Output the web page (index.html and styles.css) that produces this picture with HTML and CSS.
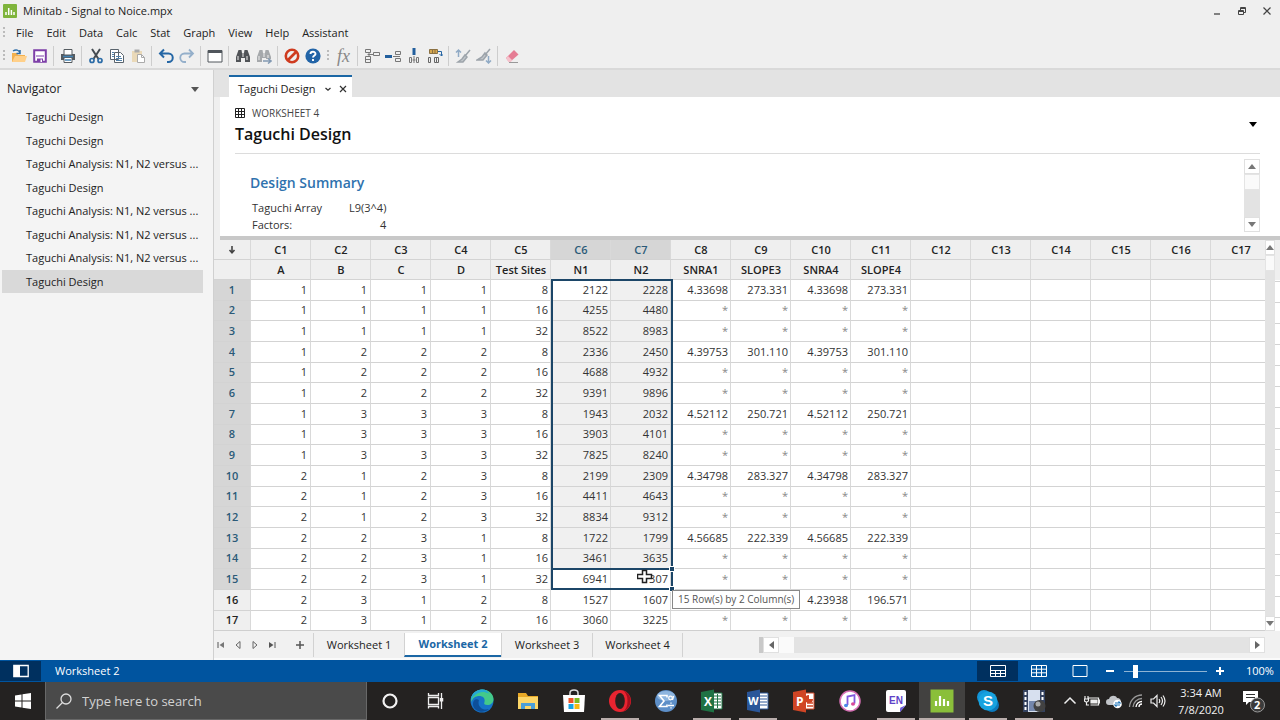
FILE: index.html
```html
<!DOCTYPE html>
<html lang="en">
<head>
<meta charset="utf-8">
<title>Minitab - Signal to Noice.mpx</title>
<link rel="stylesheet" href="styles.css">
</head>
<body>
<header class="app-head">
  <div class="titlebar">
    <svg class="logo" viewBox="0 0 14 14"><rect width="14" height="14" rx="1" fill="#7fb43c"/><path d="M3 11V8M5.7 11V4M8.4 11V6M11 11V8" stroke="#fff" stroke-width="1.5"/></svg>
    <span class="app-title">Minitab - Signal to Noice.mpx</span>
    <div class="win-buttons">
      <button aria-label="Minimize"><svg viewBox="0 0 10 10"><path d="M2 8h6" stroke="#444" stroke-width="1.3"/></svg></button>
      <button aria-label="Restore"><svg viewBox="0 0 10 10" fill="none" stroke="#444"><path d="M1.500 4.500h5v4h-5zM3.500 4V1.500h5v5H7M1.500 5.500h5M3.500 2.500h5"/></svg></button>
      <button aria-label="Close"><svg viewBox="0 0 10 10" stroke="#444" stroke-width="1.200"><path d="M1.500 1.500l7 7M8.500 1.500l-7 7"/></svg></button>
    </div>
  </div>
  <nav class="menubar">
    <i class="grip"></i>
    <button>File</button><button>Edit</button><button>Data</button><button>Calc</button><button>Stat</button><button>Graph</button><button>View</button><button>Help</button><button>Assistant</button>
  </nav>
  <div class="toolbar">
    <i class="grip"></i>
    <button aria-label="Open"><svg viewBox="0 0 16 16"><path d="M1 14V5h5l1 2h7v7z" fill="#f3b04e"/><path d="M1 14l3-6h12l-2 6z" fill="#ffd08a"/><path d="M2 3c3-2 6-1 7 2M9 2v3.500H5.500" fill="none" stroke="#2d6da8" stroke-width="1.500"/></svg></button>
    <button aria-label="Save"><svg viewBox="0 0 16 16"><path d="M2.200 2.200h11.600v11.600H2.200z" fill="#fff" stroke="#7d3fa8" stroke-width="2"/><path d="M4 8h8" stroke="#7d3fa8"/><path d="M5 10.500h6V14H5z" fill="#7d3fa8"/><path d="M8.500 11.500h1.500V14H8.500z" fill="#fff"/></svg></button>
    <i class="sep"></i>
    <button aria-label="Print"><svg viewBox="0 0 16 16"><path d="M1 6h14v6H1z" fill="#555b60"/><path d="M4 1.500h8V7H4zM4 9.500h8v5H4z" fill="#fff" stroke="#555b60"/><path d="M3 8.500h10M5 12h6" stroke="#4384b5" stroke-width="1.500"/></svg></button>
    <i class="sep"></i>
    <button aria-label="Cut"><svg viewBox="0 0 16 16" fill="none"><path d="M4 1l6.500 10M12 1L5.500 11" stroke="#444b52" stroke-width="2"/><circle cx="4" cy="12.500" r="2" stroke="#2d6da8" stroke-width="1.700"/><circle cx="12" cy="12.500" r="2" stroke="#2d6da8" stroke-width="1.700"/></svg></button>
    <button aria-label="Copy"><svg viewBox="0 0 16 16" fill="#fff" stroke="#59636c"><path d="M1.500 1.500h8v10h-8zM5.500 4.500h6l3 3v7h-9z"/><path d="M7 8.500h5M7 10.500h6M7 12.500h6M3 4.500h2M3 6.500h2M3 8.500h2" stroke="#5382aa"/></svg></button>
    <button aria-label="Paste"><svg viewBox="0 0 16 16"><path d="M2 3h10v11H2z" fill="#ead9b8"/><path d="M4.500 1.500h5v3h-5z" fill="#aaa"/><path d="M7.500 6.500h4l3 3v5h-7z" fill="#fff" stroke="#aaa"/><path d="M11.500 6.500v3h3" fill="none" stroke="#aaa"/></svg></button>
    <i class="sep"></i>
    <button aria-label="Undo"><svg viewBox="0 0 16 16" fill="none" stroke="#2466a5" stroke-width="2"><path d="M6 1.500L2 5.500l4 4M2 5.500h8.500a4 4 0 010 8.500H9"/></svg></button>
    <button aria-label="Redo"><svg viewBox="0 0 16 16" fill="none" stroke="#94afca" stroke-width="1.800"><path d="M10 1.500l4 4-4 4M14 5.500H5.500a4 4 0 000 8.500H7"/></svg></button>
    <i class="sep"></i>
    <button aria-label="Window"><svg viewBox="0 0 16 16"><path d="M1 2.500h14v11.500H1z" fill="#fff" stroke="#50565c"/><path d="M1 2h14v3H1z" fill="#50565c"/></svg></button>
    <i class="sep"></i>
    <button aria-label="Find"><svg viewBox="0 0 16 16" fill="#505357"><path d="M3.500 2h3l.5 3h2l.5-3h3L15 9v5h-5v-4H6v4H1V9z"/><path d="M3 8v4M12 8v4M8 5v4" stroke="#eee"/></svg></button>
    <button aria-label="Find next"><svg viewBox="0 0 16 16" fill="#a5a8ab"><path d="M3.500 2h3l.5 3h2l.5-3h3L15 9v2h-5v-1H6v4H1V9z"/><path d="M3 8v4M12 7v3M8 5v4" stroke="#eee"/><path d="M7 13h7M12 10.500l3 2.500-3 2.500" stroke="#8299b2" fill="none" stroke-width="1.500"/></svg></button>
    <i class="sep"></i>
    <button aria-label="Cancel"><svg viewBox="0 0 16 16" fill="none" stroke="#cf3b1f" stroke-width="2.600"><circle cx="8" cy="8" r="6.200"/><path d="M4 12l8-8"/></svg></button>
    <button aria-label="Help"><svg viewBox="0 0 16 16"><circle cx="8" cy="8" r="7.600" fill="#2264a7"/><path d="M5.500 6a2.500 2.300 0 115 0c0 1.500-2.500 1.500-2.500 3.500M8 11v2" fill="none" stroke="#fff" stroke-width="1.900"/></svg></button>
    <i class="grip mid"></i>
    <button class="fx" aria-label="Formula">fx</button>
    <i class="sep"></i>
    <button aria-label="Insert cells"><svg viewBox="0 0 16 16" fill="none" stroke="#777"><path d="M1.500 1.500h5v3h-5zM1.500 8.500h5v6h-5zM1.500 11.500h5M9.500 4.500h6v3h-6zM4 6.500h5M6 4.500l-2 2 2 2"/></svg></button>
    <button aria-label="Insert row"><svg viewBox="0 0 16 16" fill="none" stroke="#777"><path d="M0 8.500h7" stroke="#225f9d" stroke-width="3"/><path d="M10.500 3.500h5v3h-5zM10.500 10.500h5v3h-5zM8 8.500h7"/></svg></button>
    <button aria-label="Insert column"><svg viewBox="0 0 16 16" fill="none" stroke="#777"><path d="M3.500 9.500h2v5h-2zM10.500 9.500h2v5h-2zM8 8v7M6.500 12h3"/><path d="M8 0v7" stroke="#225f9d" stroke-width="3"/></svg></button>
    <button aria-label="Move columns"><svg viewBox="0 0 16 16" fill="none" stroke="#666"><path d="M2.500 1.500h8v4h-8z" fill="#d6a74f" stroke="#8b7142"/><path d="M5.500 1v5M8 1v5" stroke="#8b7142"/><path d="M1.500 9.500h2v5h-2zM7.500 9.500h2v5h-2zM9.500 9.500h2v5h-2z"/><path d="M11 3.500h3.500V8M12.500 6l2 2 2-2" stroke="#2766a4"/></svg></button>
    <i class="sep"></i>
    <button aria-label="Brush up"><svg viewBox="0 0 16 16" fill="none" stroke="#9da4ab" stroke-width="1.500"><path d="M15 2l-5 6M10 7l2 2-4 5H3l4-3z" fill="#c3c8cc"/><path d="M3.500 9V2M1 4.500L3.500 2 6 4.500" stroke="#90aac5"/></svg></button>
    <button aria-label="Brush down"><svg viewBox="0 0 16 16" fill="none" stroke="#9da4ab" stroke-width="1.500"><path d="M14 1L9 7M9 5l2 2-4 5H1l5-3z" fill="#c3c8cc"/><path d="M12.500 8v7M10 12.500l2.500 2.500 2.500-2.500" stroke="#90aac5"/></svg></button>
    <i class="sep"></i>
    <button aria-label="Erase"><svg viewBox="0 0 16 16"><path d="M2 10l8-8 4.500 4.500-8 7H4.500z" fill="#e57d94"/><path d="M2 10l2-2 4.500 4.500-2 1.500h-2z" fill="#f5c2cc"/><path d="M5 14.500h9" stroke="#999"/></svg></button>
  </div>
</header>
<div class="workspace">
  <aside class="navigator">
    <div class="nav-head"><span>Navigator</span><button class="caret" aria-label="Navigator options"></button></div>
    <ul class="nav-list">
      <li>Taguchi Design</li><li>Taguchi Design</li><li>Taguchi Analysis: N1, N2 versus ...</li><li>Taguchi Design</li><li>Taguchi Analysis: N1, N2 versus ...</li><li>Taguchi Analysis: N1, N2 versus ...</li><li>Taguchi Analysis: N1, N2 versus ...</li><li class="current">Taguchi Design</li>
    </ul>
  </aside>
  <main class="main">
    <div class="doc-tabs">
      <div class="doc-tab"><span>Taguchi Design</span>
        <button aria-label="Tab options"><svg viewBox="0 0 8 8" fill="none" stroke="#333" stroke-width="1.300"><path d="M1.500 3L4 5.200 6.500 3"/></svg></button>
        <button aria-label="Close tab"><svg viewBox="0 0 8 8" stroke="#333" stroke-width="1.200"><path d="M1 1l6 6M7 1L1 7"/></svg></button>
      </div>
    </div>
    <section class="output">
      <div class="out-head">
        <div class="out-source"><svg viewBox="0 0 10 10" fill="none" stroke="#222"><path d="M.5.500h9v9h-9zM.5 3.500h9M.5 6.500h9M3.500.500v9M6.500.500v9"/></svg><span>WORKSHEET 4</span></div>
        <h1>Taguchi Design</h1>
        <button class="caret dark" aria-label="Output options"></button>
      </div>
      <div class="out-body">
        <div class="summary">
          <h2>Design Summary</h2>
          <table class="facts"><tbody><tr><th scope="row">Taguchi Array</th><td>L9(3^4)</td></tr><tr><th scope="row">Factors:</th><td>4</td></tr></tbody></table>
        </div>
        <div class="vscroll out-scroll"><button class="up" aria-label="Scroll up"></button><i class="thumb"></i><button class="down" aria-label="Scroll down"></button></div>
      </div>
    </section>
    <section class="sheet">
      <div class="grid-wrap">
        <table class="grid">
          <colgroup id="cols"><col class="col-num"></colgroup>
          <thead id="head"></thead>
          <tbody id="rows"></tbody>
        </table>
        <div class="selection"></div>
        <div class="active-row"></div>
        <div class="tip">15 Row(s) by 2 Column(s)</div>
        <svg class="cursor" viewBox="0 0 16 16"><path d="M5.500 1.500h4v4h5v4h-5v4h-4v-4h-5v-4h5z" fill="#fff" stroke="#222" stroke-width="1.500"/></svg>
      </div>
      <div class="vscroll sheet-scroll"><button class="up" aria-label="Scroll up"></button><i class="thumb"></i><button class="down" aria-label="Scroll down"></button></div>
      <div class="edge"></div>
    </section>
    <div class="sheet-bar">
      <div class="steps">
        <button aria-label="First"><svg viewBox="0 0 10 10"><path d="M2 2v6" stroke="#555"/><path d="M8 2v6L3.500 5z" fill="#777"/></svg></button>
        <button aria-label="Previous"><svg viewBox="0 0 10 10"><path d="M7 1.500v7L3 5z" fill="none" stroke="#666"/></svg></button>
        <button aria-label="Next"><svg viewBox="0 0 10 10"><path d="M3 1.500v7L7 5z" fill="none" stroke="#666"/></svg></button>
        <button aria-label="Last"><svg viewBox="0 0 10 10"><path d="M8 2v6" stroke="#555"/><path d="M2 2v6l4.500-3z" fill="#555"/></svg></button>
      </div>
      <button class="add" aria-label="Add worksheet"><svg viewBox="0 0 10 10"><path d="M5 1v8M1 5h8" stroke="#555" stroke-width="1.500"/></svg></button>
      <button class="ws">Worksheet 1</button><button class="ws on">Worksheet 2</button><button class="ws">Worksheet 3</button><button class="ws last">Worksheet 4</button>
      <div class="hscroll"><button class="left" aria-label="Scroll left"></button><i class="thumb"></i><button class="right" aria-label="Scroll right"></button></div>
    </div>
  </main>
</div>
<footer class="status">
  <button class="tile" aria-label="Toggle navigator"><svg viewBox="0 0 16 14"><path d="M.8 1.500h14.400v11H.8z" fill="none" stroke="#fff" stroke-width="1.300"/><path d="M1 1h6v12H1z" fill="#fff"/></svg></button>
  <span class="status-name">Worksheet 2</span>
  <div class="views">
    <button class="tile" aria-label="Split view"><svg viewBox="0 0 16 14" fill="none" stroke="#fff"><path d="M.5 1.500h15v11H.5zM1 6.500h14M1 9.500h14M5.500 7v5M10.500 7v5"/></svg></button>
    <button aria-label="Data view"><svg viewBox="0 0 16 14" fill="none" stroke="#fff"><path d="M.5 1.500h15v11H.5zM1 5.200h14M1 8.800h14M5.500 2v10M10.500 2v10"/></svg></button>
    <button aria-label="Output view"><svg viewBox="0 0 16 14" fill="none" stroke="#fff"><path d="M1 1.500h14v11H1z"/></svg></button>
  </div>
  <div class="zoom">
    <button aria-label="Zoom out"><svg viewBox="0 0 8 8"><path d="M0 4h8" stroke="#fff" stroke-width="2"/></svg></button>
    <input type="range" min="0" max="100" value="12" aria-label="Zoom level">
    <button aria-label="Zoom in"><svg viewBox="0 0 8 8"><path d="M0 4h8M4 0v8" stroke="#fff" stroke-width="2"/></svg></button>
    <span class="percent">100%</span>
  </div>
</footer>
<footer class="taskbar">
  <button class="start" aria-label="Start"><svg viewBox="0 0 16 16" fill="#fff"><path d="M0 2.500l6.500-1v6H0zM7.500 1.300L16 0v7.500H7.500zM0 8.500h6.500v6L0 13.500zM7.500 8.500H16V16l-8.500-1.300z"/></svg></button>
  <label class="search"><svg viewBox="0 0 16 16" fill="none" stroke="#ddd" stroke-width="1.300"><circle cx="10" cy="6" r="5"/><path d="M6.500 9.500L.5 15.500"/></svg><input type="text" placeholder="Type here to search" aria-label="Type here to search"></label>
  <div class="apps">
    <button aria-label="Cortana"><svg viewBox="0 0 24 24"><circle cx="12" cy="12" r="6.500" fill="none" stroke="#f2f2f2" stroke-width="2.200"/></svg></button>
    <button aria-label="Task view"><svg viewBox="0 0 24 24" fill="none" stroke="#eee" stroke-width="1.300"><path d="M4.500 8.500h10v7h-10zM4.500 4v2.500h10V4M4.500 19.500v-2h10v2M17.500 4v16"/><path d="M17.500 9v3.500" stroke-width="3.500"/></svg></button>
    <button aria-label="Edge"><svg viewBox="0 0 24 24"><circle cx="12" cy="12" r="11.500" fill="#1673c8"/><path d="M1 10C2 4 7 .5 12 .5c7 0 11.500 5 11.500 9.500 0 4-3 6-6 6-3 0-4-1-3-3 1-4-2-6-5-6-4 0-7 2-8 6z" fill="#43c98a"/><path d="M1 10C2 4 7 .5 12 .5c4 0 6 2 7 4-8-4-15 0-18 7z" fill="#24a8d6"/><path d="M9 11c-2 6 3 11 10 9-5 5-15 3-16-4-.5-5 3-7 6-5z" fill="#0d4f99"/></svg></button>
    <button aria-label="Files"><svg viewBox="0 0 24 24"><path d="M2 4h8l2 3h10v13H2z" fill="#e8a927"/><path d="M2 8h20v12H2z" fill="#fcd668"/><path d="M5 20v-6h14v6h-4v-3H9v3z" fill="#4b9fd8"/></svg></button>
    <button aria-label="Store"><svg viewBox="0 0 24 24"><path d="M8 6V4q0-3 4-3t4 3v2" fill="none" stroke="#ddd" stroke-width="1.500"/><path d="M1 6h22l-1 17H2z" fill="#fff"/><path d="M6.500 9h5v5h-5z" fill="#ee5329"/><path d="M12.500 9h5v5h-5z" fill="#7dba22"/><path d="M6.500 15h5v5h-5z" fill="#18a4e3"/><path d="M12.500 15h5v5h-5z" fill="#f8b912"/></svg></button>
    <button class="run" aria-label="Opera"><svg viewBox="0 0 24 24"><circle cx="12" cy="12" r="11" fill="#e92430"/><path d="M15 1.500a11 11 0 010 21c3-2 4.500-5.500 4.500-10.500S18 3.500 15 1.500z" fill="#a70e1d"/><ellipse cx="12" cy="12" rx="4.800" ry="8" fill="#28201f"/></svg></button>
    <button aria-label="Statistics"><svg viewBox="0 0 24 24"><circle cx="12" cy="12" r="11" fill="#5d8fc8"/><ellipse cx="12" cy="7" rx="9" ry="5" fill="#8db5df"/><path d="M13 8.500V6.500H5.500L10 12l-4.500 5.500H13v-2" fill="none" stroke="#fff" stroke-width="1.600"/><circle cx="16.500" cy="9" r="1.800" fill="none" stroke="#fff" stroke-width="1.200"/><path d="M19.500 7l-1 4M14 16.500h6M17 13.500v1.300M17 18.200v1.300" stroke="#fff" stroke-width="1.300"/></svg></button>
    <button class="run" aria-label="Excel"><svg viewBox="0 0 24 24"><path d="M12 4h10v16H12z" fill="#fff" stroke="#1f7244"/><path d="M14 7h7M14 10h7M14 13h7M14 16h7M17.500 5v14" stroke="#1f7244"/><path d="M1 3l13-2.500v23L1 21z" fill="#1f7244"/><text x="4" y="17" class="ic-app">X</text></svg></button>
    <button class="run" aria-label="Word"><svg viewBox="0 0 24 24"><path d="M12 4h10v16H12z" fill="#fff" stroke="#2a5699"/><path d="M14 7h7M14 10h7M14 13h7M14 16h7" stroke="#2a5699"/><path d="M1 3l13-2.500v23L1 21z" fill="#2a5699"/><text x="2" y="16" class="ic-word">W</text></svg></button>
    <button aria-label="PowerPoint"><svg viewBox="0 0 24 24"><path d="M12 4h10v16H12z" fill="#fff" stroke="#d04525"/><path d="M15 14h6M15 17h6" stroke="#d04525" stroke-width="1.500"/><path d="M17 6v4h4a4 4 0 11-4-4z" fill="#d04525"/><path d="M1 3l13-2.500v23L1 21z" fill="#d04525"/><text x="4" y="17" class="ic-app">P</text></svg></button>
    <button aria-label="Music"><svg viewBox="0 0 24 24"><circle cx="12" cy="12" r="10" fill="#fff" stroke="#d870b5" stroke-width="1.500"/><path d="M9.500 16V7.500l7-1.500v8.500" fill="none" stroke="#8158dc" stroke-width="1.800"/><ellipse cx="8" cy="16.500" rx="2" ry="1.800" fill="#4a8be8"/><ellipse cx="15" cy="15" rx="2" ry="1.800" fill="#d9489a"/></svg></button>
    <button class="run" aria-label="Language"><svg viewBox="0 0 24 24"><path d="M4 1h16q2 0 2 2v13l-6 7H4q-2 0-2-2V3q0-2 2-2z" fill="#fff"/><path d="M22 16l-6 7v-3q0-2 2-2z" fill="#6658d8"/><text x="5" y="15" class="ic-en">EN</text></svg></button>
    <button class="run active" aria-label="Minitab"><svg viewBox="0 0 24 24"><path d="M.5.500h23v23H.5z" fill="#8abf3a"/><path d="M6 17v-5M10 17V7M14 17v-7M18 17v-5" stroke="#fff" stroke-width="2.200"/></svg></button>
    <button class="run" aria-label="Skype"><svg viewBox="0 0 24 24"><circle cx="8" cy="8" r="7" fill="#1294d8"/><circle cx="16" cy="16" r="7" fill="#0b79bd"/><circle cx="12" cy="12" r="9.500" fill="#17a2df"/><text x="7" y="17" class="ic-s">S</text></svg></button>
    <button class="run" aria-label="Recorder"><svg viewBox="0 0 24 24"><path d="M1 1h22v22H1z" fill="#d7e0ef"/><path d="M1 1h5v22H1zM18 1h5v22h-5z" fill="#34425f"/><path d="M2.500 3h2v3h-2zM2.500 8h2v3h-2zM2.500 13h2v3h-2zM2.500 18h2v3h-2zM19.500 3h2v3h-2zM19.500 8h2v3h-2z" fill="#fff"/><path d="M7 12h10v10H7z" fill="#7487ac"/><circle cx="17.500" cy="17" r="6" fill="#424242"/><circle cx="16" cy="15" r="2.500" fill="#aaa"/></svg></button>
  </div>
  <div class="tray">
    <button aria-label="Hidden icons"><svg viewBox="0 0 16 16" fill="none" stroke="#eee" stroke-width="1.500"><path d="M2.500 10.500L8 5l5.500 5.500"/></svg></button>
    <button aria-label="Battery"><svg viewBox="0 0 16 16" fill="none" stroke="#eee" stroke-width="1.200"><path d="M4.500 5h10v7h-8M14.500 7h1v3h-1M1 3v3M4 3v3M.5 6h4v2l-1.500 1H2L.5 8zM2.500 9v3H5"/><path d="M7 7h6v3H7z" fill="#eee"/></svg></button>
    <button aria-label="Cloud"><svg viewBox="0 0 16 16"><path d="M3 12a3 3 0 010-6c1-4 7-4 8-1 3 0 4 2 4 4l-2 3z" fill="#c2c5c9"/><circle cx="11.500" cy="11" r="4.300" fill="#fff"/><path d="M9 10h5l-1.500-1.500M14 12H9l1.500 1.500" fill="none" stroke="#1671b8" stroke-width="1.200"/></svg></button>
    <button aria-label="Network"><svg viewBox="0 0 16 16" fill="none" stroke="#999" stroke-width="1.300"><path d="M1.500 14A12.500 12.500 0 0114 2M5 14a9 9 0 019-8.500"/><path d="M8 14a6 6 0 016-5.500M11 14a3 3 0 013-3" stroke="#fff"/></svg></button>
    <button aria-label="Volume"><svg viewBox="0 0 16 16" fill="none" stroke="#eee" stroke-width="1.200"><path d="M1 6h2.500L7 2.500v11L3.500 10H1zM9 6q1.500 2 0 4M11 4q3 4 0 8M13 2.500q4 5.500 0 11"/></svg></button>
    <div class="clock"><time>3:34 AM</time><time>7/8/2020</time></div>
    <button class="notes" aria-label="Notifications"><svg viewBox="0 0 26 26"><path d="M2 3h15v11h-9l-3 3v-3H2z" fill="#fff"/><path d="M5 6.500h9M5 9.500h9" stroke="#333"/><circle cx="16.500" cy="17" r="7" fill="#3b3b3b" stroke="#999"/><text x="13" y="21" class="ic-count">2</text></svg></button>
  </div>
</footer>
<script src="app.js"></script>
</body>
</html>
```
FILE: app.js
```js
const names = ["A", "B", "C", "D", "Test Sites", "N1", "N2", "SNRA1", "SLOPE3", "SNRA4", "SLOPE4"];
const factors = ["1 1 1 1", "1 2 2 2", "1 3 3 3", "2 1 2 3", "2 2 3 1", "2 3 1 2"];
const sites = [8, 16, 32];
const n1 = [2122, 4255, 8522, 2336, 4688, 9391, 1943, 3903, 7825, 2199, 4411, 8834, 1722, 3461, 6941, 1527, 3060];
const n2 = [2228, 4480, 8983, 2450, 4932, 9896, 2032, 4101, 8240, 2309, 4643, 9312, 1799, 3635, 7307, 1607, 3225];
const ratios = [["4.33698", "273.331"], ["4.39753", "301.110"], ["4.52112", "250.721"], ["4.34798", "283.327"], ["4.56685", "222.339"], ["4.23938", "196.571"]];
const COLS = 17;
const TIP_ROW = 15;

function cell(tag, text, cls) {
  const el = document.createElement(tag);
  el.textContent = text;
  if (cls) el.className = cls;
  return el;
}

const cols = document.getElementById("cols");
const ids = document.createElement("tr");
const titles = document.createElement("tr");
const corner = cell("th", "", "corner");
corner.innerHTML = '<svg viewBox="0 0 8 8"><path d="M4 0v6M1.500 4L4 6.700 6.500 4" fill="none" stroke="#444" stroke-width="1.600"/></svg>';
ids.append(corner);
titles.append(cell("th", ""));
for (let c = 1; c <= COLS; c++) {
  const col = document.createElement("col");
  if (c < COLS) col.className = "col-data";
  cols.append(col);
  ids.append(cell("th", "C" + c, c === 6 || c === 7 ? "picked" : ""));
  titles.append(cell("th", names[c - 1] || ""));
}
document.getElementById("head").append(ids, titles);

const body = document.getElementById("rows");
for (let r = 0; r < n1.length; r++) {
  const group = Math.floor(r / 3);
  const pair = r % 3 === 0 ? ratios[group] : ["*", "*"];
  // The size tip lies over the first two result cells of its row.
  const left = r === TIP_ROW ? ["", ""] : pair;
  const values = [...factors[group].split(" "), sites[r % 3], n1[r], n2[r], ...left, ...pair];
  const row = document.createElement("tr");
  row.append(cell("th", r + 1, r < 15 ? "picked" : ""));
  for (let c = 1; c <= COLS; c++) {
    const value = values[c - 1] ?? "";
    let cls = value === "*" ? "missing" : "";
    if ((c === 6 || c === 7) && r < 14 && !(c === 6 && r === 0)) cls = "in-range";
    row.append(cell("td", value, cls));
  }
  body.append(row);
}
```
FILE: styles.css
```css
* { box-sizing: border-box; }
body { margin: 0; height: 100vh; display: flex; flex-direction: column; overflow: hidden; font: 11px/16px "Open Sans", "Noto Sans", sans-serif; color: #222; background: #efefef; }
button { font: inherit; color: inherit; border: 0; padding: 0; background: none; display: flex; align-items: center; justify-content: center; }
svg { display: block; flex: none; }
i { display: block; flex: none; }

.app-head { height: 70px; flex: none; border-bottom: 2px solid #d9d9d9; background: #efefef; }
.titlebar { height: 21px; display: flex; align-items: center; padding-left: 3px; }
.logo { width: 14px; height: 14px; margin-right: 6px; }
.win-buttons { margin-left: auto; display: flex; gap: 15px; padding-right: 8px; }
.win-buttons button, .win-buttons svg { width: 10px; height: 10px; }
.menubar { height: 23px; display: flex; align-items: center; padding-left: 3px; gap: 13px; }
.menubar .grip { margin-right: -2px; }
.grip { width: 2px; height: 12px; background: repeating-linear-gradient(#bbb 0 2px, transparent 2px 4px); }
.toolbar { height: 24px; display: flex; align-items: center; padding-left: 3px; }
.toolbar .grip { margin-right: 3px; }
.toolbar .grip.mid { margin: 0 4px; }
.toolbar button { width: 21px; height: 22px; }
.toolbar svg { width: 16px; height: 16px; }
.toolbar .fx { font: italic 18px/20px "Liberation Serif", serif; color: #888; }
.sep { width: 1px; height: 20px; margin: 0 3px; background: #cdcdcd; }

.workspace { flex: 1; min-height: 0; display: flex; }
.navigator { width: 214px; flex: none; background: #f4f4f4; border-right: 1px solid #d0d0d0; padding-top: 10px; }
.nav-head { display: flex; align-items: center; justify-content: space-between; padding: 0 13px 0 7px; height: 18px; font-size: 12px; }
.caret { width: 10px; height: 10px; }
.caret::after { content: ""; border: 4px solid transparent; border-top: 5px solid #555; border-bottom: 0; }
.caret.dark::after { border-top-color: #000; }
.nav-list { list-style: none; margin: 7px 10px 0 2px; padding: 0; height: 188px; display: grid; grid-template-rows: repeat(8, 1fr); }
.nav-list li { padding-left: 24px; line-height: 23px; }
.nav-list .current { background: #d9d9d9; }

.main { flex: 1; min-width: 0; display: flex; flex-direction: column; }
.doc-tabs { height: 27px; flex: none; background: #e3e3e3; display: flex; align-items: flex-end; padding-left: 15px; }
.doc-tab { height: 22px; border-top: 2px solid #1b67a5; background: #fff; display: flex; align-items: center; padding: 3px 5px 0 9px; gap: 7px; }
.doc-tab span { margin-right: 2px; }
.doc-tab button, .doc-tab svg { width: 8px; height: 8px; }
.output { height: 143px; flex: none; margin-left: 6px; background: #fff; border-bottom: 4px solid #c8c8c8; padding: 8px 20px 0 15px; overflow: hidden; }
.out-head { display: grid; grid-template-columns: 1fr auto; height: 49px; border-bottom: 1px solid #dcdcdc; align-content: start; }
.out-source { display: flex; align-items: center; gap: 7px; font-size: 10px; color: #444; grid-column: 1 / 3; }
.out-source svg { width: 10px; height: 10px; }
h1 { margin: 0; font-size: 16px; line-height: 26px; font-weight: 600; color: #111; }
.out-head .caret { width: 14px; height: 6px; }
.out-body { display: flex; justify-content: space-between; }
.summary { padding: 17px 0 0 15px; }
h2 { margin: 0; font-size: 14px; line-height: 24px; font-weight: 600; color: #2f72ae; }
.facts { border-collapse: collapse; margin: 4px 0 0 2px; color: #333; }
.facts th { font-weight: 400; text-align: left; padding: 0; width: 97px; }
.facts td { padding: 0; text-align: right; line-height: 17px; }
.vscroll { display: flex; flex-direction: column; background: #e3e3e3; }
.vscroll button, .hscroll button { background: #fff; border: 1px solid #e0e0e0; }
.vscroll button { width: 100%; height: 15px; }
.vscroll .thumb { height: 16px; background: #fafafa; border: 1px solid #e4e4e4; }
.vscroll .down { margin-top: auto; }
.up::after { content: ""; border: 4px solid transparent; border-top: 0; border-bottom: 5px solid #777; }
.down::after { content: ""; border: 4px solid transparent; border-bottom: 0; border-top: 5px solid #777; }
.left::after { content: ""; border: 4px solid transparent; border-left: 0; border-right: 5px solid #666; }
.right::after { content: ""; border: 4px solid transparent; border-right: 0; border-left: 5px solid #666; }
.out-scroll { width: 16px; height: 73px; margin-top: 5px; }

.sheet { flex: 1; min-height: 0; display: flex; background: #fff; }
.grid-wrap { position: relative; flex: 1; min-width: 0; }
.grid { width: 100%; height: 100%; table-layout: fixed; border-collapse: separate; border-spacing: 0; border-bottom: 1px solid #cfcfcf; }
.col-num { width: 37px; }
.col-data { width: 60px; }
.grid th, .grid td { padding: 0; line-height: 16px; white-space: nowrap; border-right: 1px solid #d9d9d9; border-bottom: 1px solid #d3d3d3; }
.grid tr > :last-child { border-right: 0; padding-left: 6px; }
.grid tbody tr:last-child > * { border-bottom: 0; }
.grid thead tr { height: 20px; }
.grid th { background: #efefef; font-weight: 600; text-align: center; color: #222; }
.grid thead th:not(:first-child) { padding-left: 1px; }
.grid thead th:last-child { padding-left: 6px; }
.corner svg { width: 8px; height: 8px; margin: 0 auto; }
.grid th.picked { background: #d6d6d6; color: #2b5a78; }
.grid td { text-align: right; padding-right: 2px; color: #333; }
.grid td:nth-child(2), .grid td:nth-child(3), .grid td:nth-child(4), .grid td:nth-child(5) { padding-right: 3px; }
.grid td.in-range { background: #f0f0f0; }
.grid td.missing { color: #888; }
.selection, .active-row { position: absolute; left: 337px; width: 122px; border: 2px solid #1c4668; }
.selection { top: 39px; height: 311px; }
.active-row { top: 328px; height: 22px; }
.active-row::before, .active-row::after { content: ""; position: absolute; right: -3px; width: 4px; height: 4px; background: #1c4668; outline: 1px solid #fff; }
.active-row::before { top: -3px; }
.active-row::after { bottom: -3px; }
.tip { position: absolute; left: 458px; top: 350px; height: 19px; padding: 0 5px; line-height: 17px; font-size: 10px; background: #fff; border: 1px solid #888; color: #555; }
.cursor { position: absolute; left: 423px; top: 329px; width: 16px; height: 16px; }
.sheet-scroll { width: 10px; }
.edge { width: 5px; background: linear-gradient(#efefef 0 40px, transparent 40px), repeating-linear-gradient(#fff 0 20px, #d3d3d3 20px 21px); }

.sheet-bar { height: 29px; flex: none; background: #f1f1f1; display: flex; align-items: center; border-bottom: 2px solid #fafafa; }
.steps { display: flex; gap: 7px; padding-left: 2px; }
.steps button, .steps svg, .add svg { width: 10px; height: 10px; }
.add { width: 33px; height: 22px; margin-left: 3px; padding-left: 7px; }
.ws { width: 91px; height: 24px; border-left: 1px solid #d2d2d2; color: #222; }
.ws.last { border-right: 1px solid #d2d2d2; }
.ws.on { width: 97px; background: #fff; border-bottom: 2px solid #1b67a5; color: #1b67a5; font-weight: 700; }
.hscroll { flex: 1; display: flex; height: 16px; margin: 0 15px 0 76px; border-left: 4px solid #c9c9c9; background: #e3e3e3; }
.hscroll button { width: 16px; height: 16px; }
.hscroll .thumb { width: 15px; background: #fafafa; }
.hscroll .right { margin-left: auto; }

.status { height: 22px; flex: none; background: #00549f; color: #fff; display: flex; align-items: center; }
.tile { width: 41px; height: 20px; background: #00305f; }
.status svg { width: 16px; height: 14px; }
.status-name { padding-left: 14px; }
.views { display: flex; margin-left: auto; }
.views button { width: 41px; height: 20px; }
.zoom { display: flex; align-items: center; padding: 0 7px 0 6px; gap: 6px; }
.zoom svg, .zoom button { width: 8px; height: 8px; }
.zoom input { appearance: none; width: 83px; height: 14px; margin: 0 3px 0 4px; background: linear-gradient(#8db3d4, #8db3d4) center / 100% 1px no-repeat; }
.zoom input::-webkit-slider-thumb { appearance: none; width: 5px; height: 13px; background: #fff; }
.percent { width: 27px; margin-left: 16px; text-align: right; }

.taskbar { height: 38px; flex: none; background: #242221; color: #f1f1f1; display: flex; }
.start { width: 45px; }
.start svg { width: 16px; height: 16px; }
.search { flex: 0 1 322px; background: #4a4a4a; border: 1px solid #686868; border-width: 0 1px 1px; display: flex; align-items: center; padding-left: 10px; gap: 10px; }
.search svg { width: 16px; height: 16px; }
.search input { flex: 1; min-width: 0; font: 13px/20px "Open Sans", sans-serif; border: 0; background: none; color: #eee; padding: 0; }
.search input::placeholder { color: #d2d2d2; opacity: 1; }
.apps { display: flex; }
.apps button { width: 46px; position: relative; }
.apps svg { width: 24px; height: 24px; }
.run::after { content: ""; position: absolute; left: 4px; right: 4px; bottom: 0; height: 2px; background: #b9adab; }
.run.active { background: #424140; }
.run.active::after { left: 0; right: 0; }
.tray { display: flex; align-items: center; margin-left: auto; padding-right: 13px; }
.tray button { width: 22px; height: 100%; }
.tray svg { width: 16px; height: 16px; }
.clock { width: 64px; display: flex; flex-direction: column; align-items: center; line-height: 17px; margin-right: 8px; }
.tray .notes { width: 26px; }
.tray .notes svg { width: 26px; height: 26px; }
.ic-app { font: 700 12px "Open Sans", sans-serif; fill: #fff; }
.ic-word { font: 700 11px "Open Sans", sans-serif; fill: #fff; }
.ic-en { font: 700 10px "Liberation Sans", sans-serif; fill: #5e42c8; }
.ic-s { font: 700 15px "Liberation Sans", sans-serif; fill: #fff; }
.ic-count { font: 700 11px "Open Sans", sans-serif; fill: #fff; }
```
